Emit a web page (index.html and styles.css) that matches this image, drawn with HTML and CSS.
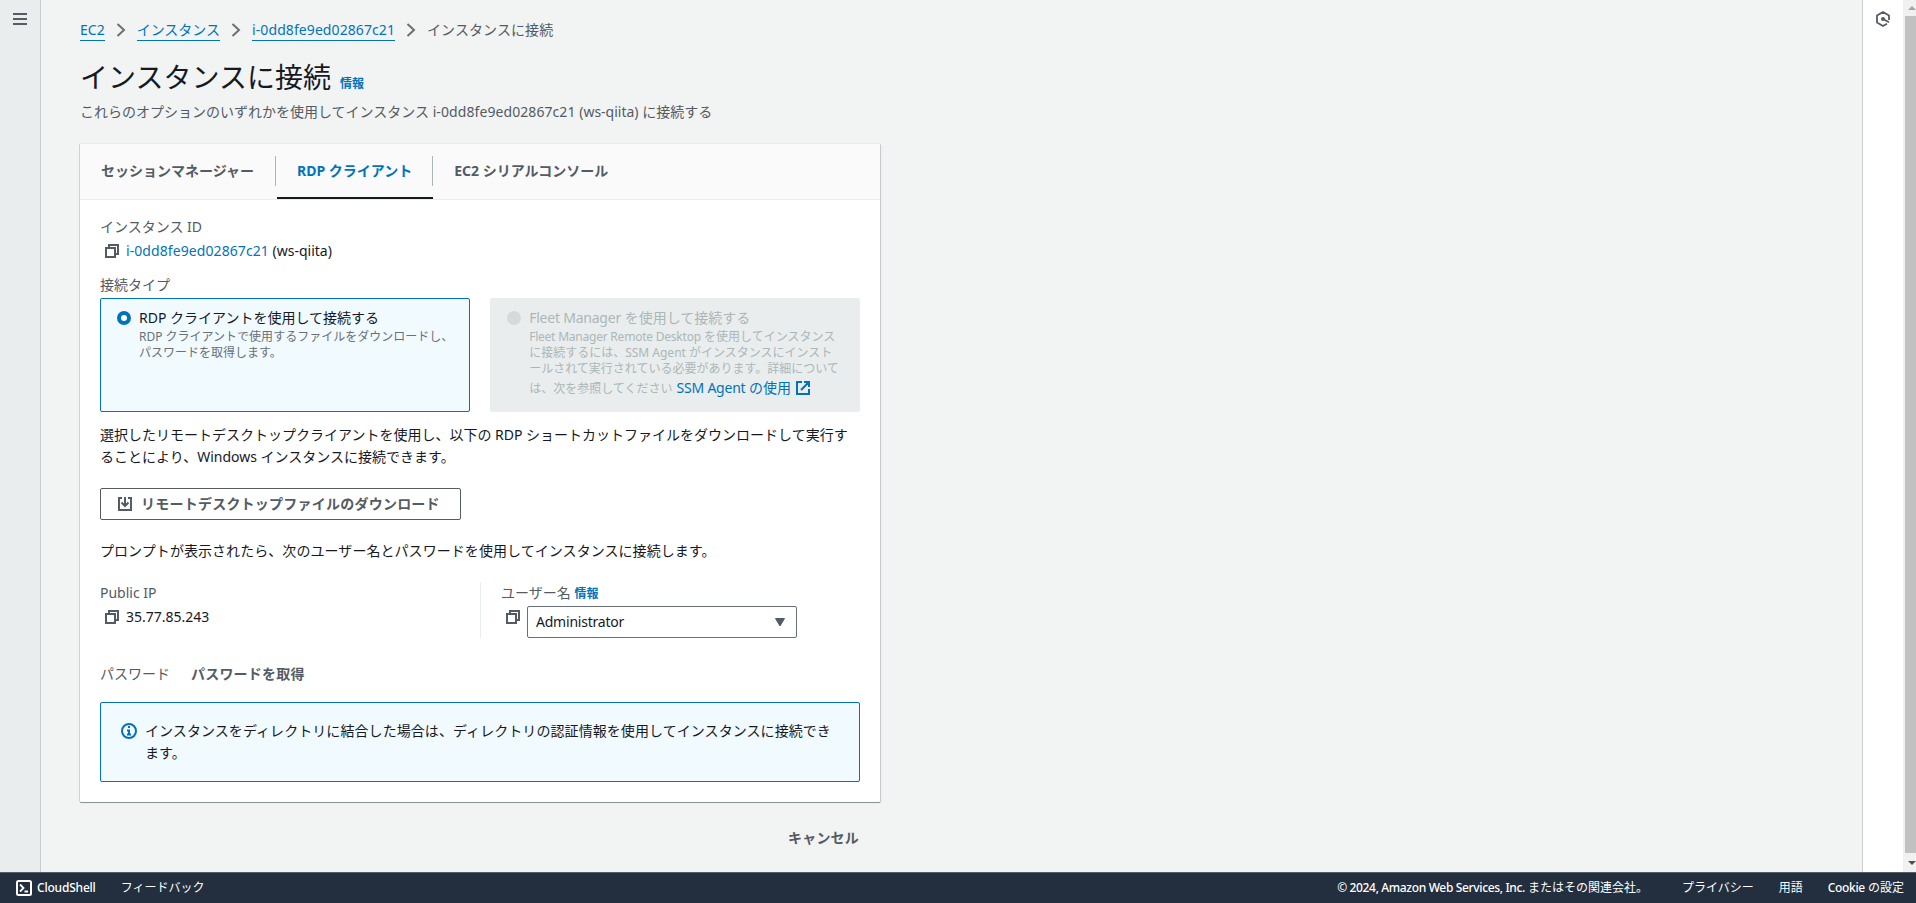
FILE: index.html
```
<!DOCTYPE html>
<html lang="ja">
<head>
  <meta charset="UTF-8" />
  <meta name="viewport" content="width=device-width, initial-scale=1.0"/>
  <title>インスタンスに接続 | EC2</title>
  <link rel="stylesheet" href="styles.css">
</head>
<body>
  <svg class="sprite" aria-hidden="true">
    <symbol id="copy" viewBox="0 0 14 14">
      <path d="M4 4V1h9v9h-3M1 4h9v9H1z" fill="none" stroke="currentColor" stroke-width="2"/>
    </symbol>
    <symbol id="chevron" viewBox="0 0 10 14">
      <path d="M1.5 1l6.5 6-6.5 6" fill="none" stroke="currentColor" stroke-width="2"/>
    </symbol>
  </svg>

  <div class="layout">
    <aside class="left-rail">
      <svg class="menu-icon" viewBox="0 0 14 12"><path d="M0 1h14M0 6h14M0 11h14" stroke="currentColor" stroke-width="2"/></svg>
    </aside>

    <main>
      <nav class="breadcrumbs">
        <a href="#">EC2</a>
        <svg class="chevron"><use href="#chevron"/></svg>
        <a href="#">インスタンス</a>
        <svg class="chevron"><use href="#chevron"/></svg>
        <a href="#" class="id">i-0dd8fe9ed02867c21</a>
        <svg class="chevron"><use href="#chevron"/></svg>
        <span>インスタンスに接続</span>
      </nav>

      <div class="title">
        <h1>インスタンスに接続</h1>
        <a href="#" class="info">情報</a>
      </div>
      <p class="subtitle">これらのオプションのいずれかを使用してインスタンス <span class="id">i-0dd8fe9ed02867c21</span> (ws-qiita) に接続する</p>

      <section class="card">
        <div class="tabs">
          <a href="#" class="tab"><span>セッションマネージャー</span></a>
          <a href="#" class="tab active"><span>RDP クライアント</span></a>
          <a href="#" class="tab"><span>EC2 シリアルコンソール</span></a>
        </div>

        <div class="card-body">
          <div class="label">インスタンス ID</div>
          <div class="value">
            <svg class="copy"><use href="#copy"/></svg>
            <span><a href="#" class="id">i-0dd8fe9ed02867c21</a> (ws-qiita)</span>
          </div>

          <div class="label type-label">接続タイプ</div>
          <div class="tiles">
            <div class="tile selected">
              <span class="radio"></span>
              <div>
                <div class="tile-title">RDP クライアントを使用して接続する</div>
                <div class="tile-desc">RDP クライアントで使用するファイルをダウンロードし、<br>パスワードを取得します。</div>
              </div>
            </div>
            <div class="tile disabled">
              <span class="radio"></span>
              <div>
                <div class="tile-title"><span class="latin">Fleet Manager</span> を使用して接続する</div>
                <div class="tile-desc"><span class="latin">Fleet Manager Remote Desktop</span> を使用してインスタンス<br>に接続するには、SSM Agent がインスタンスにインスト<br>ールされて実行されている必要があります。詳細について</div>
                <div class="tile-link">は、次を参照してください <a href="#"><span class="latin">SSM Agent</span> の使用
                  <svg class="external" viewBox="0 0 14 14"><path d="M6 1H1v12h12V8M8 1h5v5M13 1L5 9" fill="none" stroke="currentColor" stroke-width="2"/></svg></a>
                </div>
              </div>
            </div>
          </div>

          <p class="text">選択したリモートデスクトップクライアントを使用し、以下の RDP ショートカットファイルをダウンロードして実行す<br>ることにより、Windows インスタンスに接続できます。</p>

          <button class="btn">
            <svg viewBox="0 0 14 14"><path d="M4 1H1v12h12V1h-3M7 0v9M3.500 5.500L7 9l3.500-3.500" fill="none" stroke="currentColor" stroke-width="2"/></svg>
            リモートデスクトップファイルのダウンロード
          </button>

          <p class="text prompt">プロンプトが表示されたら、次のユーザー名とパスワードを使用してインスタンスに接続します。</p>

          <div class="columns">
            <div class="column">
              <div class="label">Public IP</div>
              <div class="value">
                <svg class="copy"><use href="#copy"/></svg>
                <span>35.77.85.243</span>
              </div>
            </div>
            <div class="column">
              <div class="label">ユーザー名 <a href="#" class="info">情報</a></div>
              <div class="value user">
                <svg class="copy"><use href="#copy"/></svg>
                <div class="select">
                  <span class="latin">Administrator</span>
                  <svg viewBox="0 0 10 9"><path d="M.5.5h9L5 8z" fill="currentColor" stroke="currentColor" stroke-linejoin="round"/></svg>
                </div>
              </div>
            </div>
          </div>

          <div class="password">
            <span class="label">パスワード</span>
            <a href="#" class="link-btn">パスワードを取得</a>
          </div>

          <div class="alert">
            <svg viewBox="0 0 16 16"><circle cx="8" cy="8" r="7" fill="none" stroke="currentColor" stroke-width="2"/><path d="M7 4h2M6 7.500h2v4M6 11.500h4" fill="none" stroke="currentColor" stroke-width="2"/></svg>
            <p>インスタンスをディレクトリに結合した場合は、ディレクトリの認証情報を使用してインスタンスに接続でき<br>ます。</p>
          </div>
        </div>
      </section>

      <div class="actions">
        <a href="#" class="link-btn">キャンセル</a>
      </div>
    </main>

    <aside class="right-rail">
      <svg viewBox="0 0 14 16"><path d="M13 9V4.500L7 1 1 4.500v7L7 15l4-2.300" fill="none" stroke="currentColor" stroke-width="1.800" stroke-linejoin="round"/><circle cx="7" cy="8" r="2" fill="currentColor"/><path d="M7 8l6 3.200" stroke="currentColor" stroke-width="1.800"/></svg>
    </aside>
    <div class="scrollbar">
      <span class="arrow up"></span>
      <span class="thumb"></span>
      <span class="arrow down"></span>
    </div>
  </div>

  <footer>
    <a href="#" class="cloudshell">
      <svg viewBox="0 0 16 16"><rect x="1" y="1" width="14" height="14" rx="1.500" fill="none" stroke="currentColor" stroke-width="2"/><path d="M4 4.500L7.500 8 4 11.500M8.500 11.500H12" fill="none" stroke="currentColor" stroke-width="1.800"/></svg>
      <span>CloudShell</span>
    </a>
    <a href="#" class="feedback">フィードバック</a>
    <span class="copyright"><span>© 2024, Amazon Web Services, Inc.</span> またはその関連会社。</span>
    <a href="#">プライバシー</a>
    <a href="#">用語</a>
    <a href="#" class="cookie"><span>Cookie</span> の設定</a>
  </footer>
</body>
</html>
```
FILE: styles.css
```
:root {
  --text: #16191f;
  --grey: #545b64;
  --light-grey: #687078;
  --blue: #0073bb;
  --navy: #232f3e;
}

* {
  box-sizing: border-box;
}

body {
  margin: 0;
  height: 100vh;
  display: flex;
  flex-direction: column;
  overflow: hidden;
  font-family: "Noto Sans", "Noto Sans CJK JP", sans-serif;
  font-size: 14px;
  line-height: 22px;
  color: var(--text);
  background: #f2f3f3;
  white-space: nowrap;
}

h1, p {
  margin: 0;
  font-weight: 400;
}

a {
  color: var(--blue);
  text-decoration: none;
}

svg {
  flex: none;
}

.sprite {
  display: none;
}

.layout {
  flex: 1;
  min-height: 0;
  display: flex;
}

.left-rail {
  width: 41px;
  padding: 13px;
  background: #eaeded;
  border-right: 1px solid #c9cfcf;
  color: var(--grey);
}

.menu-icon {
  display: block;
  width: 14px;
  height: 12px;
}

main {
  flex: 1;
  padding: 19px 39px 0;
}

/* page header */
.breadcrumbs {
  display: flex;
  align-items: center;
  height: 22px;
  color: var(--grey);
}

.breadcrumbs a {
  height: 21px;
  line-height: 20px;
  border-bottom: 1px solid var(--blue);
}

.breadcrumbs span {
  line-height: 20px;
  height: 21px;
  letter-spacing: 0.1px;
}

.chevron {
  width: 10px;
  height: 14px;
  margin: 0 11px;
  color: var(--light-grey);
}

.id {
  letter-spacing: 0.08px;
}

.latin {
  letter-spacing: -0.22px;
}

.title {
  display: flex;
  align-items: baseline;
  gap: 9px;
  height: 36px;
  margin-top: 18px;
}

.title h1 {
  font-size: 28px;
  line-height: 36px;
}

.info {
  font-size: 12px;
  font-weight: 700;
}

.subtitle {
  margin-top: 6px;
  color: var(--grey);
}

/* card */
.card {
  width: 800px;
  height: 658px;
  margin-top: 21px;
  background: #fff;
  border-radius: 1px;
  box-shadow: 0 1px 0 0 #879596, 1px 1px 1px 0 #c4cccc, -1px 0 0 0 #cdd3d3, 1px 0 0 0 #cdd3d3, 0 -1px 0 0 #eaeded;
}

.tabs {
  display: flex;
  height: 56px;
  background: #fafafa;
  border-bottom: 1px solid #eaeded;
}

.tab {
  display: flex;
  align-items: center;
  height: 55px;
  padding-bottom: 2px;
  font-weight: 700;
  color: var(--grey);
}

.tab span {
  height: 30px;
  padding: 0 21px;
  line-height: 30px;
  border-right: 1px solid #aab7b8;
}

.tab:last-child span {
  border-right: 0;
}

.tab.active {
  margin-left: 1px;
  padding-bottom: 0;
  color: var(--blue);
  border-bottom: 2px solid var(--text);
}

.tab.active span {
  padding: 0 20px;
}

.card-body {
  padding: 16px 20px 20px;
}

.label {
  color: var(--grey);
}

.value {
  display: flex;
  align-items: center;
  gap: 7px;
  height: 22px;
  margin-top: 2px;
  padding-left: 5px;
}

.copy {
  width: 14px;
  height: 14px;
  color: var(--grey);
}

.type-label {
  margin-top: 12px;
}

.tiles {
  display: grid;
  grid-template-columns: 1fr 1fr;
  gap: 20px;
  margin-top: 2px;
}

.tile {
  display: flex;
  gap: 8px;
  height: 114px;
  padding: 8px 16px;
  border: 1px solid #eaeded;
  border-radius: 2px;
}

.tile.selected {
  background: #f1faff;
  border-color: var(--blue);
}

.tile.disabled {
  background: #eaeded;
  color: #aab7b8;
}

.radio {
  flex: none;
  width: 14px;
  height: 14px;
  margin-top: 4px;
  border-radius: 50%;
  background: #d5dbdb;
}

.selected .radio {
  background: #fff;
  border: 4px solid var(--blue);
}

.tile-desc {
  font-size: 12px;
  line-height: 16px;
}

.selected .tile-desc {
  color: var(--light-grey);
}

.tile-link {
  font-size: 12px;
  line-height: 22px;
}

.tile-link a {
  margin-left: 1px;
  font-size: 14px;
}

.external {
  width: 14px;
  height: 14px;
  margin-left: 1px;
  vertical-align: -2px;
}

.text {
  margin-top: 12px;
}

.btn {
  display: flex;
  align-items: center;
  gap: 9px;
  width: 361px;
  height: 32px;
  margin: 20px 0;
  padding: 0 17px;
  font: inherit;
  font-weight: 700;
  letter-spacing: 0.23px;
  color: var(--grey);
  background: #fff;
  border: 1px solid var(--grey);
  border-radius: 2px;
}

.btn svg {
  width: 14px;
  height: 14px;
}

.prompt {
  margin-top: 0;
  letter-spacing: 0.06px;
}

.columns {
  display: grid;
  grid-template-columns: 380px 380px;
  height: 56px;
  margin-top: 20px;
}

.column + .column {
  padding-left: 20px;
  border-left: 1px solid #eaeded;
}

.user {
  align-items: flex-start;
  margin-top: 1px;
}

.user .copy {
  margin-top: 4px;
}

.select {
  display: flex;
  align-items: center;
  justify-content: space-between;
  width: 270px;
  height: 32px;
  padding: 0 11px 0 8px;
  border: 1px solid var(--light-grey);
  border-radius: 2px;
}

.select svg {
  width: 10px;
  height: 9px;
  color: var(--grey);
}

.password {
  display: flex;
  gap: 21px;
  margin-top: 25px;
}

.link-btn {
  font-weight: 700;
  letter-spacing: 0.2px;
  color: var(--grey);
}

.alert {
  display: flex;
  gap: 8px;
  height: 80px;
  margin-top: 17px;
  padding: 17px 20px;
  background: #f1faff;
  border: 1px solid var(--blue);
  border-radius: 2px;
}

.alert svg {
  width: 16px;
  height: 16px;
  margin-top: 3px;
  color: var(--blue);
}

.alert p {
  letter-spacing: 0.07px;
}

.actions {
  width: 779px;
  margin-top: 25px;
  text-align: right;
}

/* right side */
.right-rail {
  width: 41px;
  padding: 11px 13px;
  background: #fff;
  border-left: 1px solid #c9cfcf;
  color: var(--grey);
}

.right-rail svg {
  display: block;
  width: 14px;
  height: 16px;
}

.scrollbar {
  width: 13px;
  display: flex;
  flex-direction: column;
  padding: 6px 0 7px 2px;
  background: #f1f1f1;
}

.thumb {
  flex: 1;
  margin: 6px 0 8px;
  background: #c1c1c1;
}

.arrow {
  width: 8px;
  height: 4px;
  margin-left: 3px;
  background: #505050;
  clip-path: polygon(0 0, 100% 0, 50% 100%);
}

.arrow.up {
  background: #a3a3a3;
  clip-path: polygon(50% 0, 100% 100%, 0 100%);
}

footer {
  display: flex;
  align-items: center;
  height: 31px;
  padding: 0 12px 0 16px;
  font-size: 12px;
  color: #fff;
  background: var(--navy);
  border-top: 1px solid #545b64;
}

footer a {
  margin-left: 25px;
  color: #fff;
}

footer .cloudshell {
  display: flex;
  align-items: center;
  gap: 5px;
  margin-left: 0;
}

.cloudshell svg {
  width: 16px;
  height: 16px;
}

.cloudshell span,
.copyright span,
.cookie span {
  font-weight: 500;
  letter-spacing: -0.35px;
}

.cloudshell span {
  letter-spacing: -0.2px;
}

.copyright {
  margin: 0 9px 0 auto;
}
```
